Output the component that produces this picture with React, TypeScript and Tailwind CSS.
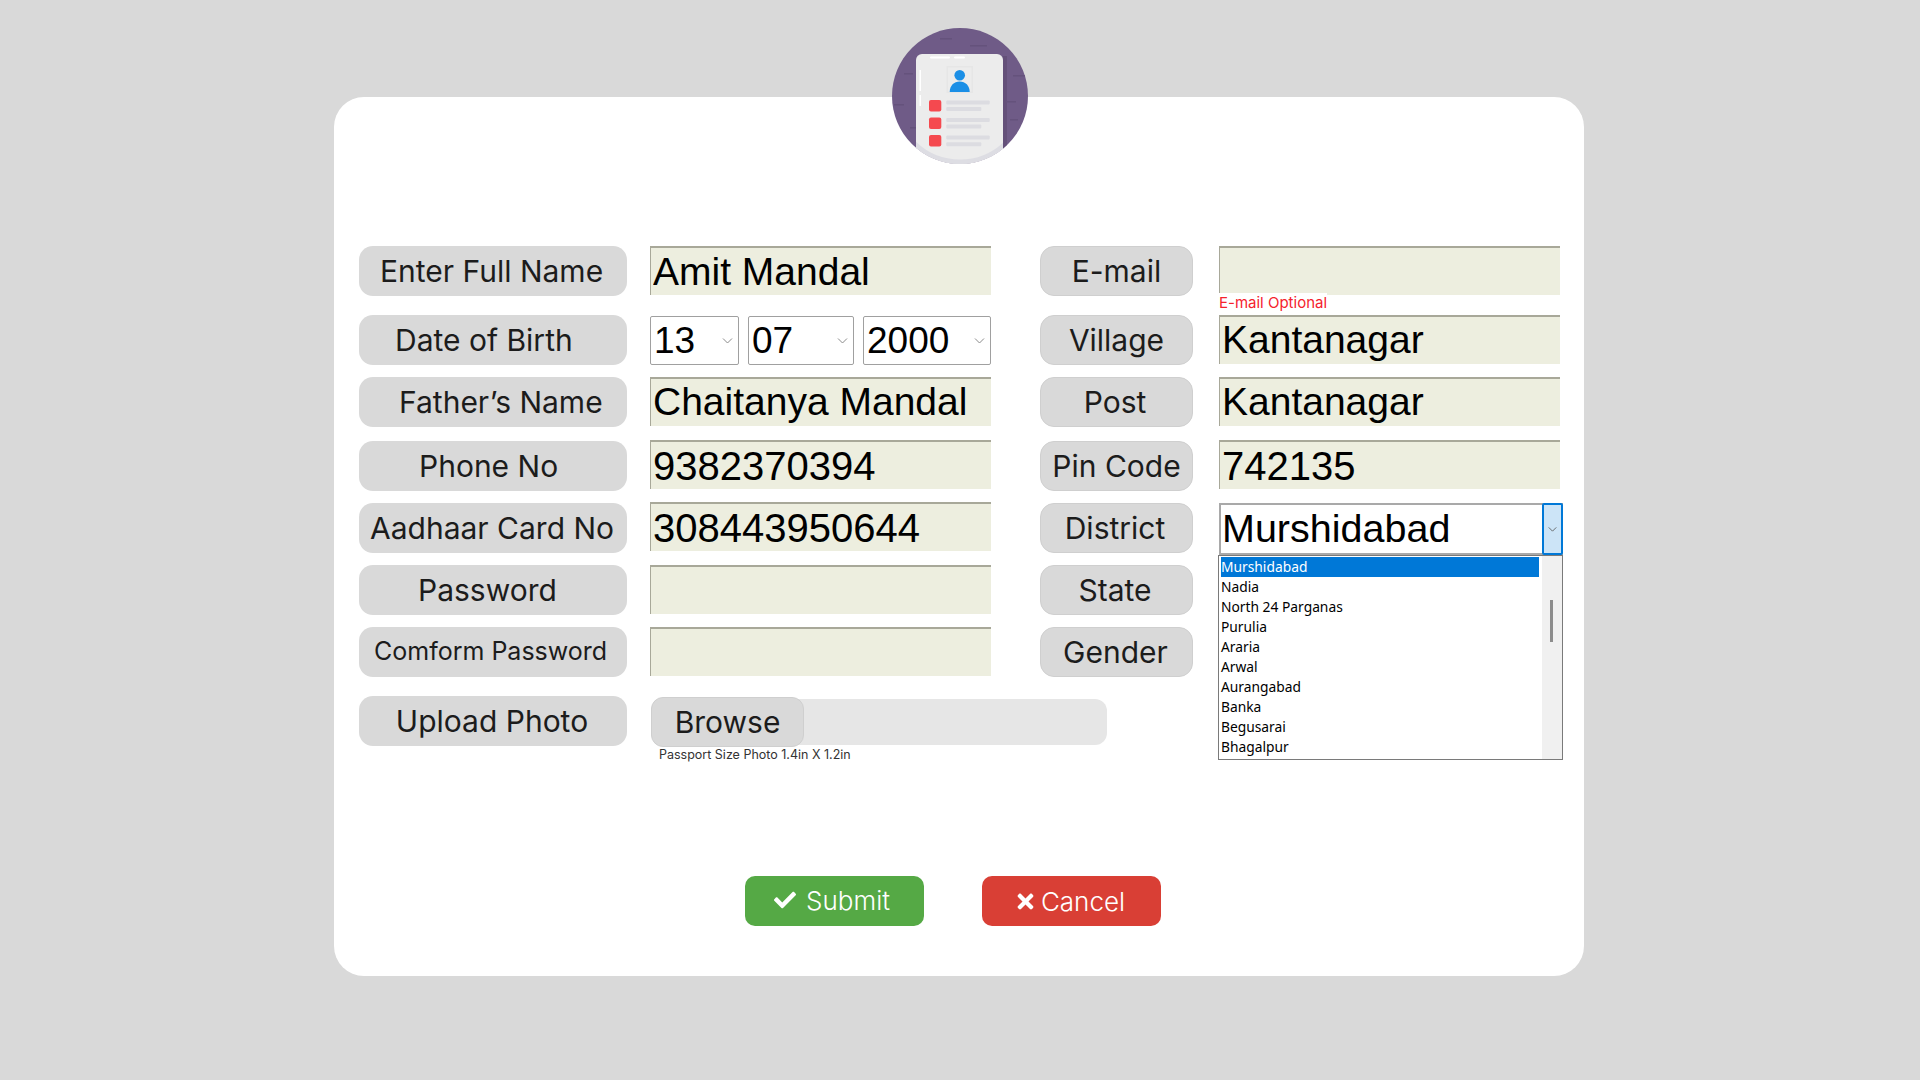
import { FaCheck, FaTimes } from "react-icons/fa";

const Chevron = ({ className }: { className: string }) => (
  <svg viewBox="0 0 10 6" fill="none" stroke="currentColor" strokeWidth="1" className={className}>
    <path d="M0.5 0.5L5 5L9.5 0.5" />
  </svg>
);

const Label = ({ text, className }: { text: string; className: string }) => (
  <div
    className={`flex h-[50px] shrink-0 items-center rounded-[14px] bg-[#d9d9d9] text-[30px] text-[#1c1c1c] ${className}`}
  >
    {text}
  </div>
);

const Field = ({ value, className = "" }: { value?: string; className?: string }) => (
  <input
    readOnly
    value={value ?? ""}
    className={`h-[49px] w-[341px] shrink-0 border-t-2 border-l border-[#a8a899] bg-[#edeedf] pl-0.5 font-['Liberation_Sans',sans-serif] text-[39px] text-black outline-none ${className}`}
  />
);

const Dropdown = ({ value, className }: { value: string; className: string }) => (
  <div
    className={`flex h-[49px] items-center justify-between rounded-[2px] border border-[#a0a0a0] bg-white pl-[3px] pr-[5px] font-['Liberation_Sans',sans-serif] text-[37px] text-black ${className}`}
  >
    {value}
    <Chevron className="h-[6px] w-[11px] text-[#8a8a8a]" />
  </div>
);

const Avatar = () => (
  <svg viewBox="0 0 136 136" className="absolute left-[558px] top-[-69px] h-[136px] w-[136px]">
    <defs>
      <clipPath id="circleClip">
        <circle cx="68" cy="68" r="68" />
      </clipPath>
      <clipPath id="docClip">
        <rect x="24" y="26" width="87" height="110" />
      </clipPath>
    </defs>
    <g clipPath="url(#circleClip)">
      <rect width="136" height="136" fill="#6f5b87" />
      <rect x="111" y="28" width="4" height="108" fill="#645079" />
      <g fill="#65527c">
        <rect x="48" y="10" width="12" height="1.5" />
        <rect x="78" y="17" width="17" height="1.5" />
        <rect x="12" y="45" width="9" height="1.5" />
        <rect x="121" y="47" width="12" height="1.5" />
        <rect x="2" y="76" width="10" height="1.5" />
        <rect x="114" y="73" width="10" height="1.5" />
        <rect x="118" y="91" width="8" height="1.5" />
        <rect x="18" y="99" width="6" height="1.5" />
      </g>
      <rect x="24" y="26" width="87" height="120" rx="6" fill="#ececec" />
      <g clipPath="url(#docClip)">
        <circle cx="68" cy="68" r="66" fill="none" stroke="#dddde3" strokeWidth="5" />
      </g>
      <g fill="#ffffff">
        <rect x="38" y="28.5" width="20" height="2" rx="1" />
        <rect x="62" y="28.5" width="11" height="2" rx="1" />
        <rect x="27.5" y="42" width="1.5" height="21" />
        <rect x="27.5" y="67" width="1.5" height="11" />
      </g>
      <rect x="54.5" y="38" width="26.5" height="27" fill="#e6e6e6" />
      <rect x="56" y="39.5" width="23.5" height="24" fill="#ececec" />
      <circle cx="67.7" cy="47.3" r="5.3" fill="#1b8fe6" />
      <path d="M57.7 64C57.7 57.5 62 53.4 67.7 53.4C73.4 53.4 77.7 57.5 77.7 64Z" fill="#1b8fe6" />
      <g fill="#f5494f">
        <rect x="37" y="72" width="12.3" height="11.5" rx="2" />
        <rect x="37" y="89.5" width="12.3" height="11.5" rx="2" />
        <rect x="37" y="107" width="12.3" height="11.5" rx="2" />
      </g>
      <g fill="#dcdce1">
        <rect x="54.3" y="72.4" width="43.4" height="4" rx="1" />
        <rect x="54.3" y="79" width="35" height="4" rx="1" />
        <rect x="54.3" y="90" width="43.4" height="4" rx="1" />
        <rect x="54.3" y="96.6" width="35" height="4" rx="1" />
        <rect x="54.3" y="107.6" width="43.4" height="4" rx="1" />
        <rect x="54.3" y="114.2" width="35" height="4" rx="1" />
      </g>
    </g>
  </svg>
);

const districts = [
  "Nadia",
  "North 24 Parganas",
  "Purulia",
  "Araria",
  "Arwal",
  "Aurangabad",
  "Banka",
  "Begusarai",
  "Bhagalpur",
];

const DistrictList = () => (
  <div className="absolute left-[884px] top-[458px] flex h-[205px] w-[345px] border border-[#7a7a7a] bg-white font-['Noto_Sans',sans-serif] text-[13.8px] leading-[20px] text-black">
    <div className="flex-1 pl-0.5 pt-[1px]">
      <div className="w-[318px] bg-[#0078d7] text-white">Murshidabad</div>
      {districts.map((d) => (
        <div key={d}>{d}</div>
      ))}
    </div>
    <div className="relative w-5 bg-[#f0f0f0]">
      <div className="absolute left-[8px] top-[44px] h-[42px] w-[3px] bg-[#8c8c8c]" />
    </div>
  </div>
);

export default function App() {
  return (
    <div className="flex h-screen w-full justify-center overflow-hidden bg-[#d9d9d9] font-['Inter',sans-serif]">
      <div className="relative mr-[2px] mt-[97px] h-[879px] w-[1250px] rounded-[30px] bg-white pl-[25px] pt-[149px]">
        <Avatar />

        <div className="flex items-start">
          <Label text="Enter Full Name" className="w-[268px] pl-[21px]" />
          <Field value="Amit Mandal" className="ml-[23px] pt-px" />
          <Label text="E-mail" className="ml-[49px] w-[153px] justify-center border border-[#cfcfcf]" />
          <div className="relative ml-[26px]">
            <Field />
            <div className="absolute left-0 top-[47px] bg-white text-[15px] leading-[20px] text-[#f5222d]">E-mail Optional</div>
          </div>
        </div>

        <div className="mt-[19px] flex items-start">
          <Label text="Date of Birth" className="w-[268px] pl-[36px]" />
          <div className="ml-[23px] flex w-[341px] shrink-0 pt-px">
            <Dropdown value="13" className="w-[89px]" />
            <Dropdown value="07" className="ml-[9px] w-[106px]" />
            <Dropdown value="2000" className="ml-[9px] w-[128px]" />
          </div>
          <Label text="Village" className="ml-[49px] w-[153px] justify-center border border-[#cfcfcf]" />
          <Field value="Kantanagar" className="ml-[26px]" />
        </div>

        <div className="mt-[12px] flex items-start">
          <Label text="Father’s Name" className="w-[268px] pl-[40px]" />
          <Field value="Chaitanya Mandal" className="ml-[23px]" />
          <Label text="Post" className="ml-[49px] w-[153px] justify-center border border-[#cfcfcf] pr-[3px]" />
          <Field value="Kantanagar" className="ml-[26px]" />
        </div>

        <div className="mt-[14px] flex items-start">
          <Label text="Phone No" className="w-[268px] pl-[60px]" />
          <Field value="9382370394" className="ml-[23px] -mt-px !text-[40px]" />
          <Label text="Pin Code" className="ml-[49px] w-[153px] justify-center border border-[#cfcfcf]" />
          <Field value="742135" className="ml-[26px] -mt-px !text-[40px]" />
        </div>

        <div className="mt-[12px] flex items-start">
          <Label text="Aadhaar Card No" className="w-[268px] pl-[11px]" />
          <Field value="308443950644" className="ml-[23px] -mt-px !text-[40px]" />
          <Label text="District" className="ml-[49px] w-[153px] justify-center border border-[#cfcfcf] pr-[3px]" />
          <div className="ml-[26px] flex h-[52px] w-[344px] items-center justify-between border-2 border-[#a9a9a9] border-r-0 bg-white pl-[1px] font-['Liberation_Sans',sans-serif] text-[39.5px] text-black">
            Murshidabad
            <div className="flex h-[52px] w-[21px] items-center justify-center rounded-[2px] border-2 border-[#0078d7] bg-[#cce4f7]">
              <Chevron className="h-[5px] w-[9px] text-[#555555]" />
            </div>
          </div>
        </div>

        <div className="mt-[10px] flex items-start">
          <Label text="Password" className="w-[268px] pl-[59px]" />
          <Field className="ml-[23px]" />
          <Label text="State" className="ml-[49px] w-[153px] justify-center border border-[#cfcfcf] pr-[3px]" />
        </div>

        <div className="mt-[12px] flex items-start">
          <Label text="Comform Password" className="w-[268px] pl-[15px] !text-[25px]" />
          <Field className="ml-[23px]" />
          <Label text="Gender" className="ml-[49px] w-[153px] justify-center border border-[#cfcfcf] pr-[2px]" />
        </div>

        <div className="mt-[19px] flex items-start">
          <Label text="Upload Photo" className="w-[268px] justify-center pr-[2px]" />
          <div className="relative ml-[24px] mt-[3px] h-[46px] w-[456px] rounded-[12px] bg-[#e6e6e6]">
            <div className="flex h-[50px] w-[153px] -translate-y-[2px] items-center justify-center rounded-[12px] border border-[#cfcfcf] bg-[#d9d9d9] text-[30px] text-[#1c1c1c]">
              Browse
            </div>
            <div className="absolute left-[8px] top-[48px] text-[12.5px] leading-[16px] text-[#333333]">
              Passport Size Photo 1.4in X 1.2in
            </div>
          </div>
        </div>

        <div className="mt-[130px] flex pl-[386px]">
          <button className="flex h-[50px] w-[179px] items-center justify-center gap-[10px] rounded-[10px] bg-[#55a945] pb-[2px] pr-[5px] text-[26px] font-light text-white">
            <FaCheck className="h-[22px] w-[22px]" />
            Submit
          </button>
          <button className="ml-[58px] flex h-[50px] w-[179px] items-center justify-center gap-[4px] rounded-[10px] bg-[#d93f35] pr-[4px] text-[26px] font-light text-white">
            <FaTimes className="h-[23px] w-[23px]" />
            Cancel
          </button>
        </div>

        <DistrictList />
      </div>
    </div>
  );
}
